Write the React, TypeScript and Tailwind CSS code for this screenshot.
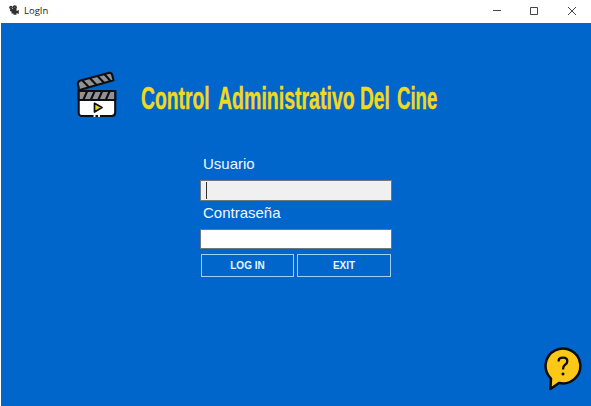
import type { ReactNode } from 'react';

function CameraIcon() {
  return (
    <svg width="10" height="11" viewBox="0 0 10 11" fill="#303030">
      <circle cx="2" cy="2.5" r="1.8" />
      <circle cx="5.800" cy="2.4" r="2.1" />
      <path d="M1.300 4H7.500V6L9.800 5V9L7.500 8V9.800H4.500V8.500H2.500V6.500L1 6z" />
      <path d="M1.600 2.500h1M5.200 2.400h1.200" stroke="#999" strokeWidth=".6" />
    </svg>
  );
}

function ClapperIcon() {
  return (
    <svg width="42" height="48" viewBox="0 0 42 48" fill="none" stroke="#0c0f14" strokeWidth="2.100" strokeLinejoin="round">
      <path d="M2.700 20H39.200V41.500Q39.200 45 35.700 45H6.200Q2.700 45 2.700 41.500Z" fill="#fff" />
      <path d="M2.700 20H39.200V29H2.700Z" fill="#929292" />
      <path d="M11 20.500L7.500 28.500M18.500 20.500L15 28.500M26 20.500L22.500 28.500M33.500 20.500L30 28.500" />
      <path d="M2.700 19V16.500L1.900 13.500Q1.300 10.700 4.500 9.400L32.500 1.900Q35.500 1.300 36.300 4.200L37.500 9.300L6 18.300Q4 18.700 2.700 20Z" fill="#929292" />
      <path d="M6.500 9.500L13 16.200M14 7.200L20.500 14M21.500 5.100L28 11.800M28.500 3.300L34.500 10" />
      <path d="M18.500 32.300L26 36.600L18.500 41Z" fill="#e9dc19" strokeWidth="1.700" />
      <path d="M17.500 45h2M22 45h2" stroke="#e8f4fb" />
    </svg>
  );
}

function HelpIcon() {
  return (
    <svg width="40" height="46" viewBox="0 0 40 46" fill="none" stroke="#090b0c">
      <path d="M8 31.600A17.400 17.400 0 1 1 16 35.900L7.400 42Z" fill="#fcc817" strokeWidth="2.500" strokeLinejoin="round" />
      <path d="M15.700 14.500V13.500Q15.700 10.700 20 10.700Q24.300 10.700 24.300 14.200Q24.300 16.500 21.800 18Q20 19.200 20 22.500" strokeWidth="2.300" />
      <circle cx="20" cy="27" r="1.300" fill="#090b0c" strokeWidth=".4" />
    </svg>
  );
}

function TitleWord({ children, box, scale }: { children: ReactNode; box: string; scale: string }) {
  return (
    <span className={`block shrink-0 ${box}`}>
      <span className={`inline-block origin-left whitespace-nowrap ${scale}`}>{children}</span>
    </span>
  );
}

function FormButton({ children, width }: { children: ReactNode; width: string }) {
  return (
    <button className={`flex h-[23px] items-center justify-center border border-[#9fd0f5] pb-px text-[10px] font-bold text-[#eaf5ff] ${width}`}>
      {children}
    </button>
  );
}

export default function App() {
  return (
    <div className="flex h-[406px] w-[591px] flex-col overflow-hidden bg-white font-['Liberation_Sans',sans-serif]">
      <header className="flex h-[23px] shrink-0 items-center pl-[9px]">
        <div className="mb-[2px]"><CameraIcon /></div>
        <span className="mb-[2px] ml-[5px] font-['Open_Sans',sans-serif] text-[9.5px] leading-none text-[#222]">LogIn</span>
        <svg className="ml-auto" width="105" height="23" viewBox="0 0 105 23" fill="none" stroke="#444">
          <path d="M7 10.500h8" />
          <path d="M44.500 7.500h7v7h-7z" />
          <path d="M82 7l8 8M90 7l-8 8" />
        </svg>
      </header>
      <main className="ml-px flex grow flex-col bg-[#0066cc]">
        <div className="flex h-[130px] pl-[75px] pt-[48px]">
          <ClapperIcon />
          <h1 className="ml-[23px] mt-[9px] flex text-[32px] leading-[37px] font-bold text-[#f2d91f] [-webkit-text-stroke:0.4px_#f2d91f]">
            <TitleWord box="w-[77px]" scale="scale-x-[0.603]">Control</TitleWord>
            <TitleWord box="w-[142px]" scale="scale-x-[0.61]">Administrativo</TitleWord>
            <TitleWord box="w-[37px]" scale="scale-x-[0.6]">Del</TitleWord>
            <TitleWord box="w-[42px]" scale="scale-x-[0.58]">Cine</TitleWord>
          </h1>
        </div>
        <form className="ml-[199px] flex w-[192px] flex-col" onSubmit={(e) => e.preventDefault()}>
          <label className="h-[27px] pl-[3px] text-[15px] leading-[22px] text-[#f2f8ff]">Usuario</label>
          <div className="flex h-[21px] items-center border border-[#6d7780] bg-[#f0f0f0] pl-[5px]">
            <span className="h-[17px] w-px bg-[#333]" />
          </div>
          <label className="h-[28px] pl-[3px] text-[15px] leading-[24px] text-[#f2f8ff]">Contraseña</label>
          <div className="h-[20px] border border-[#6d7780] bg-white" />
          <div className="mt-[5px] flex gap-[3px] pl-px">
            <FormButton width="w-[93px]">LOG IN</FormButton>
            <FormButton width="w-[94px]">EXIT</FormButton>
          </div>
        </form>
        <div className="mb-[13px] mr-[8px] mt-auto flex justify-end">
          <HelpIcon />
        </div>
      </main>
    </div>
  );
}
